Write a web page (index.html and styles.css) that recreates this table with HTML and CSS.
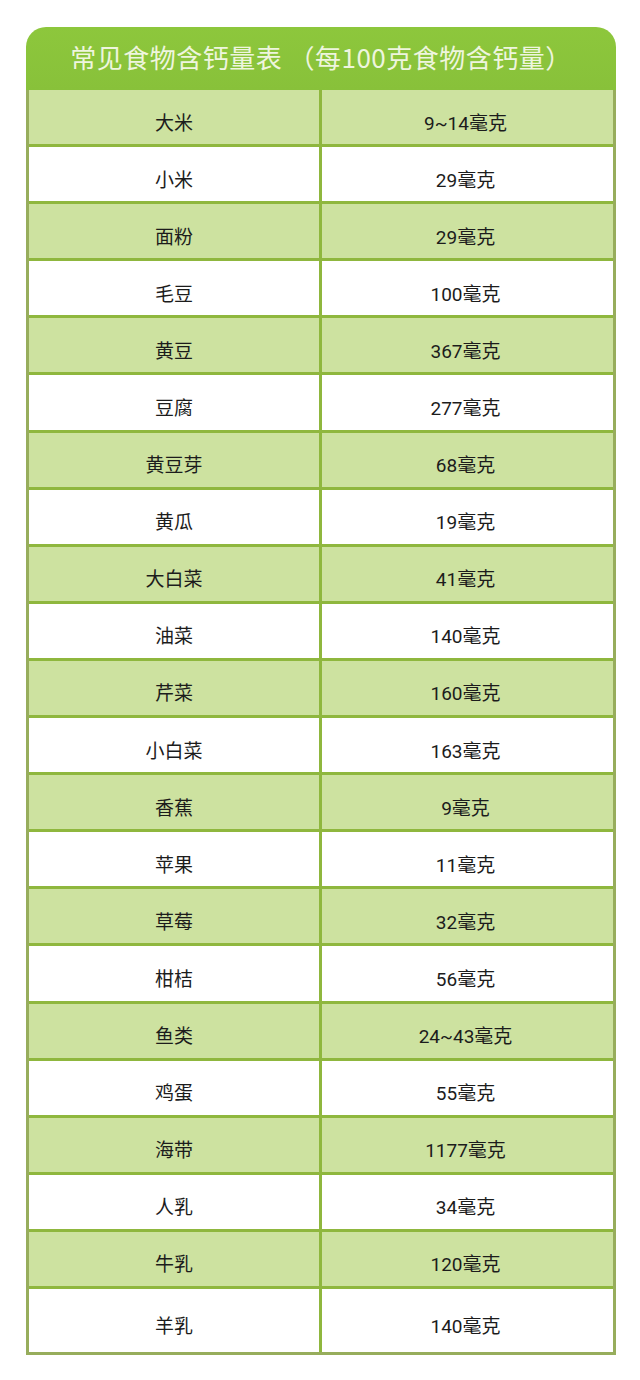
FILE: index.html
```html
<!DOCTYPE html>
<html lang="zh">
<head>
<meta charset="utf-8">
<title>常见食物含钙量表</title>
<link rel="stylesheet" href="styles.css">
</head>
<body>
<div class="card">
  <div class="title">常见食物含钙量表 （每100克食物含钙量）</div>
  <div class="table">
    <div class="row g"><div class="c">大米</div><div class="c v">9~14毫克</div></div>
    <div class="row"><div class="c">小米</div><div class="c v">29毫克</div></div>
    <div class="row g"><div class="c">面粉</div><div class="c v">29毫克</div></div>
    <div class="row"><div class="c">毛豆</div><div class="c v">100毫克</div></div>
    <div class="row g"><div class="c">黄豆</div><div class="c v">367毫克</div></div>
    <div class="row"><div class="c">豆腐</div><div class="c v">277毫克</div></div>
    <div class="row g"><div class="c">黄豆芽</div><div class="c v">68毫克</div></div>
    <div class="row"><div class="c">黄瓜</div><div class="c v">19毫克</div></div>
    <div class="row g"><div class="c">大白菜</div><div class="c v">41毫克</div></div>
    <div class="row"><div class="c">油菜</div><div class="c v">140毫克</div></div>
    <div class="row g"><div class="c">芹菜</div><div class="c v">160毫克</div></div>
    <div class="row"><div class="c">小白菜</div><div class="c v">163毫克</div></div>
    <div class="row g"><div class="c">香蕉</div><div class="c v">9毫克</div></div>
    <div class="row"><div class="c">苹果</div><div class="c v">11毫克</div></div>
    <div class="row g"><div class="c">草莓</div><div class="c v">32毫克</div></div>
    <div class="row"><div class="c">柑桔</div><div class="c v">56毫克</div></div>
    <div class="row g"><div class="c">鱼类</div><div class="c v">24~43毫克</div></div>
    <div class="row"><div class="c">鸡蛋</div><div class="c v">55毫克</div></div>
    <div class="row g"><div class="c">海带</div><div class="c v">1177毫克</div></div>
    <div class="row"><div class="c">人乳</div><div class="c v">34毫克</div></div>
    <div class="row g"><div class="c">牛乳</div><div class="c v">120毫克</div></div>
    <div class="row last"><div class="c">羊乳</div><div class="c v">140毫克</div></div>
  </div>
</div>
</body>
</html>
```

FILE: styles.css
```css
html, body {
  margin: 0;
  padding: 0;
  background: #ffffff;
}
body {
  padding-top: 27px;
  font-family: "Noto Sans CJK SC", "Noto Sans", sans-serif;
}
.card {
  margin-left: 26px;
  width: 590px;
}
.title {
  height: 63px;
  box-sizing: border-box;
  background: linear-gradient(#8dc73c, #88c13a);
  border-radius: 20px 20px 0 0;
  color: #eef5de;
  font-size: 26px;
  display: flex;
  align-items: center;
  justify-content: center;
  padding-bottom: 4px;
  letter-spacing: 0.5px;
}
.table {
  border-left: 3px solid #97ad5c;
  border-right: 3px solid #97ad5c;
  border-bottom: 3px solid #97ad5c;
}
.row {
  display: grid;
  grid-template-columns: 293px 1fr;
  height: 57.1px;
  box-sizing: border-box;
  border-bottom: 3px solid #8fb73e;
  background: #ffffff;
}
.row.g {
  background: #cde2a0;
}
.row.last {
  border-bottom: none;
  height: 63px;
}
.c {
  display: flex;
  align-items: center;
  justify-content: center;
  padding-top: 8px;
  font-size: 19px;
  color: #1c1c1c;
  font-weight: 400;
}
.c:first-child {
  border-right: 3px solid #8fb73e;
}
.v {
  font-family: Roboto, "Noto Sans CJK SC", sans-serif;
  font-size: 19px;
  padding-right: 4px;
}
```
